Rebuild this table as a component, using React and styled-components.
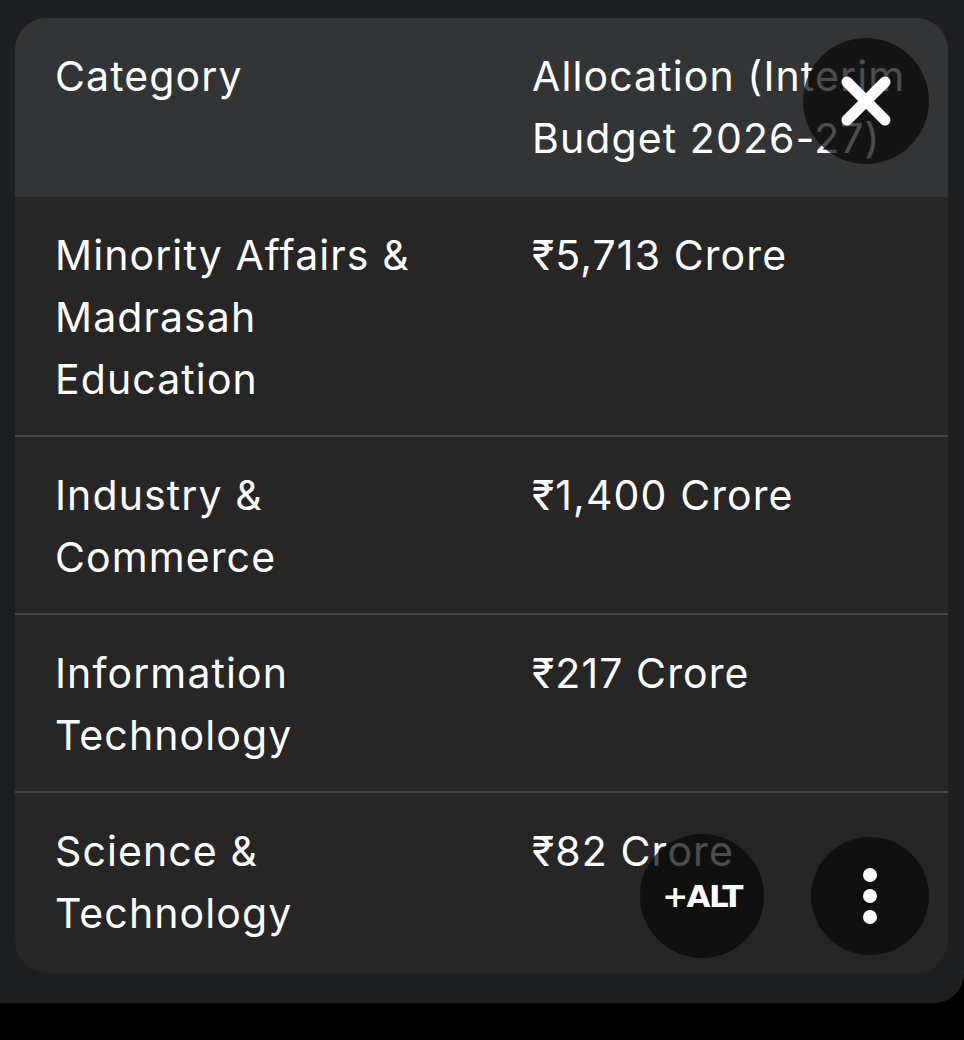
import React from 'react';
import styled, { createGlobalStyle } from 'styled-components';

const GlobalStyle = createGlobalStyle`
  body {
    margin: 0;
    background: #000;
    font-family: Inter, "Noto Sans", sans-serif;
  }
`;

const rows = [
  { category: ['Minority Affairs &', 'Madrasah', 'Education'], amount: '₹5,713 Crore' },
  { category: ['Industry &', 'Commerce'], amount: '₹1,400 Crore' },
  { category: ['Information', 'Technology'], amount: '₹217 Crore' },
  { category: ['Science &', 'Technology'], amount: '₹82 Crore' },
];

const Lines = ({ lines }) =>
  lines.map((line, i) => (
    <React.Fragment key={i}>
      {i > 0 && <br />}
      {line}
    </React.Fragment>
  ));

const App = () => {
  return (
    <Page>
      <GlobalStyle />
      <Frame>
        <Card>
          <HeaderRow>
            <Cell>Category</Cell>
            <Cell>
              <Lines lines={['Allocation (Interim', 'Budget 2026-27)']} />
            </Cell>
          </HeaderRow>
          {rows.map(r => (
            <BodyRow key={r.amount}>
              <Cell>
                <Lines lines={r.category} />
              </Cell>
              <Cell>{r.amount}</Cell>
            </BodyRow>
          ))}
        </Card>

        <CloseButton aria-label="Close">
          <svg width="54" height="54" viewBox="0 0 54 54">
            <path d="M8 8 L46 46 M46 8 L8 46" stroke="#fff" strokeWidth="11" strokeLinecap="round" />
          </svg>
        </CloseButton>
        <AltButton>+ALT</AltButton>
        <MoreButton aria-label="More">
          <Dot />
          <Dot />
          <Dot />
        </MoreButton>
      </Frame>
    </Page>
  );
};
export default App;

const Page = styled.div`
  width: 964px;
  height: 1040px;
  background: #000;
  overflow: hidden;
`;

const Frame = styled.div`
  position: relative;
  height: 1003px;
  box-sizing: border-box;
  padding: 18px 16px 0 15px;
  background: #1e1f21;
  border-bottom-right-radius: 30px;
`;

const Card = styled.div`
  height: 955px;
  background: #262626;
  border-radius: 32px;
  overflow: hidden;
`;

const Row = styled.div`
  display: grid;
  grid-template-columns: 477px 1fr;
  padding-left: 40px;
`;

const HeaderRow = styled(Row)`
  padding-top: 27px;
  padding-bottom: 28px;
  background: #333436;
`;

const BodyRow = styled(Row)`
  padding-top: 27px;
  padding-bottom: 25px;
  border-top: 2px solid #45484a;

  &:nth-child(2) {
    border-top: none;
  }
`;

const Cell = styled.div`
  color: #fff;
  font-size: 41px;
  line-height: 62px;
  letter-spacing: 1.1px;
  white-space: nowrap;
`;

const RoundButton = styled.button`
  position: absolute;
  border: none;
  padding: 0;
  border-radius: 50%;
  background: rgba(8, 8, 8, 0.72);
  color: #fff;
  display: flex;
  align-items: center;
  justify-content: center;
`;

const CloseButton = styled(RoundButton)`
  left: 803px;
  top: 38px;
  width: 126px;
  height: 126px;
`;

const AltButton = styled(RoundButton)`
  left: 640px;
  top: 834px;
  width: 124px;
  height: 124px;
  font-family: "DejaVu Sans", sans-serif;
  font-weight: 700;
  font-size: 31px;
  letter-spacing: -1.5px;
`;

const MoreButton = styled(RoundButton)`
  left: 811px;
  top: 837px;
  width: 118px;
  height: 118px;
  flex-direction: column;
  gap: 7px;
`;

const Dot = styled.span`
  width: 14px;
  height: 14px;
  border-radius: 50%;
  background: #fff;
`;
